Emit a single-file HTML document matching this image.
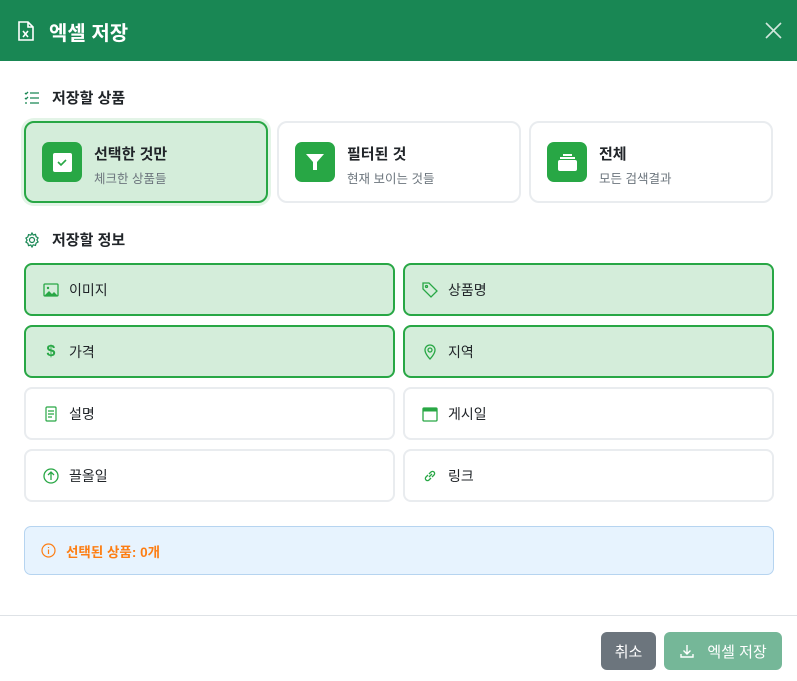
<!DOCTYPE html>
<html><head><meta charset="utf-8"><style>
*{box-sizing:border-box;margin:0;padding:0}
body{width:797px;height:681px;background:#fff;font-family:"Liberation Sans","Noto Sans CJK KR",sans-serif;position:relative;overflow:hidden;color:#212529}
.hdr{position:absolute;left:0;top:0;width:797px;height:61px;background:#198754;color:#fff}
.hdr .t{position:absolute;left:49px;top:17px;font-size:20px;font-weight:bold}
.sec{position:absolute;left:24px;font-size:15px;font-weight:bold;display:flex;align-items:center;gap:12px}
.card{position:absolute;top:121px;height:82px;width:244px;border:2px solid #e9ecef;border-radius:10px;background:#fff}
.card.on{border-color:#28a745;background:#d4edda;box-shadow:0 0 0 3px #e3f4e7}
.card .ic{position:absolute;left:16px;top:19px;width:40px;height:40px;border-radius:7px;background:#28a745}
.card .a{position:absolute;left:68px;top:20px;font-size:15px;font-weight:bold}
.card .b{position:absolute;left:68px;top:45px;font-size:12.5px;color:#6c757d}
.f{position:absolute;height:53px;width:371px;border:2px solid #e9ecef;border-radius:8px;background:#fff;font-size:14px;display:flex;align-items:center;padding-left:16px;gap:9px}
.f.on{border-color:#28a745;background:#d4edda}
.f svg{width:18px;height:18px}
.info{position:absolute;left:24px;top:526px;width:750px;height:49px;border:1px solid #b6d4f0;border-radius:7px;background:#e7f3fe;color:#fd7e14;font-weight:bold;font-size:13.5px;display:flex;align-items:center;padding-left:16px;gap:10px}
.btn{position:absolute;top:632px;height:38px;border-radius:6px;color:#fff;font-size:15px;display:flex;align-items:center;justify-content:center}
</style></head><body>
<div class="hdr">
<svg style="position:absolute;left:17px;top:20px" width="18" height="22" viewBox="0 0 18 22" fill="none" stroke="#fff" stroke-width="1.6"><path d="M2 2h9l5 5v13H2z"/><path d="M11 2v5h5"/><path d="M6 11l5 6M11 11l-5 6"/></svg>
<div class="t">엑셀 저장</div>
<svg style="position:absolute;left:765px;top:22px" width="17" height="17" viewBox="0 0 17 17" stroke="#fff" stroke-width="1.6" opacity=".8"><path d="M1 1l15 15M16 1L1 16"/></svg>
</div>
<div class="sec" style="top:87px"><svg width="16" height="14" viewBox="0 0 16 14" fill="none" stroke="#198754" stroke-width="1.3"><path d="M6 2h9M6 7h9M6 12h9M1 2l1 1 2-2M1 7l1 1 2-2M1 12h2"/></svg>저장할 상품</div>
<div class="card on" style="left:24px"><div class="ic"><svg width="40" height="40"><rect x="11" y="11" width="19" height="19" rx="2" fill="#fff"/><path d="M16 20l3 3 5-5" stroke="#28a745" stroke-width="1.6" fill="none"/></svg></div><div class="a">선택한 것만</div><div class="b">체크한 상품들</div></div>
<div class="card" style="left:277px"><div class="ic"><svg width="40" height="40"><path d="M11 12h18l-7 8v8h-4v-8z" fill="#fff"/></svg></div><div class="a">필터된 것</div><div class="b">현재 보이는 것들</div></div>
<div class="card" style="left:529px"><div class="ic"><svg width="40" height="40"><rect x="16" y="12" width="9" height="2" fill="#fff"/><rect x="13" y="15" width="15" height="2" fill="#fff"/><rect x="11" y="18" width="19" height="11" rx="2" fill="#fff"/></svg></div><div class="a">전체</div><div class="b">모든 검색결과</div></div>
<div class="sec" style="top:229px"><svg width="16" height="16" viewBox="0 0 16 16" fill="none" stroke="#198754" stroke-width="1.2"><circle cx="8" cy="8" r="2.5"/><path d="M8 1l1.2 2 2.3-.6.6 2.3 2 1.2-1.2 2 1.2 2-2 1.2-.6 2.3-2.3-.6L8 15l-1.2-2-2.3.6-.6-2.3-2-1.2 1.2-2-1.2-2 2-1.2.6-2.3 2.3.6z"/></svg>저장할 정보</div>
<div class="f on" style="left:24px;top:263px"><svg viewBox="0 0 18 18"><rect x="2" y="3" width="14" height="12" rx="1" fill="none" stroke="#28a745" stroke-width="1.3"/><path d="M2 15l5-5 3 3 2-2 4 4z" fill="#28a745"/><circle cx="6" cy="7" r="1.2" fill="#28a745"/></svg>이미지</div>
<div class="f on" style="left:403px;top:263px"><svg viewBox="0 0 18 18" fill="none" stroke="#28a745" stroke-width="1.3"><path d="M2 2h6l8 8-6 6-8-8z"/><circle cx="5.5" cy="5.5" r="1"/></svg>상품명</div>
<div class="f on" style="left:24px;top:325px"><span style="color:#28a745;font-weight:bold;width:18px;text-align:center;font-size:16px">$</span>가격</div>
<div class="f on" style="left:403px;top:325px"><svg viewBox="0 0 18 18" fill="none" stroke="#28a745" stroke-width="1.3"><path d="M9 16s5-5 5-9a5 5 0 0 0-10 0c0 4 5 9 5 9z"/><circle cx="9" cy="7" r="2"/></svg>지역</div>
<div class="f" style="left:24px;top:387px"><svg viewBox="0 0 18 18" fill="none" stroke="#28a745" stroke-width="1.2"><rect x="4" y="2" width="10" height="14" rx="1"/><path d="M6 6h6M6 9h6M6 12h4"/></svg>설명</div>
<div class="f" style="left:403px;top:387px"><svg viewBox="0 0 18 18" fill="none" stroke="#28a745" stroke-width="1.3"><rect x="2" y="3" width="14" height="13" rx="1"/><path d="M2 5h14" stroke-width="3"/></svg>게시일</div>
<div class="f" style="left:24px;top:449px"><svg viewBox="0 0 18 18" fill="none" stroke="#28a745" stroke-width="1.3"><circle cx="9" cy="9" r="7"/><path d="M9 13V5M6 8l3-3 3 3"/></svg>끌올일</div>
<div class="f" style="left:403px;top:449px"><svg viewBox="0 0 18 18" fill="none" stroke="#28a745" stroke-width="1.3"><path d="M8 10l3-3M7 8l-2 2a2 2 0 0 0 3 3l2-2M11 10l2-2a2 2 0 0 0-3-3L8 7"/></svg>링크</div>
<div class="info"><svg width="15" height="15" viewBox="0 0 15 15" fill="none" stroke="#fd7e14" stroke-width="1.2"><circle cx="7.5" cy="7.5" r="6.5"/><path d="M7.5 6.5v4.5M7.5 4v1"/></svg>선택된 상품: 0개</div>
<div style="position:absolute;left:0;top:615px;width:797px;height:1px;background:#dee2e6"></div>
<div class="btn" style="left:601px;width:55px;background:#6c757d">취소</div>
<div class="btn" style="left:664px;width:118px;background:#75b798;gap:12px"><svg width="16" height="16" viewBox="0 0 16 16" fill="none" stroke="#fff" stroke-width="1.4"><path d="M8 2v9M4.5 7.5L8 11l3.5-3.5M2 11v3h12v-3"/></svg>엑셀 저장</div>
</body></html>
